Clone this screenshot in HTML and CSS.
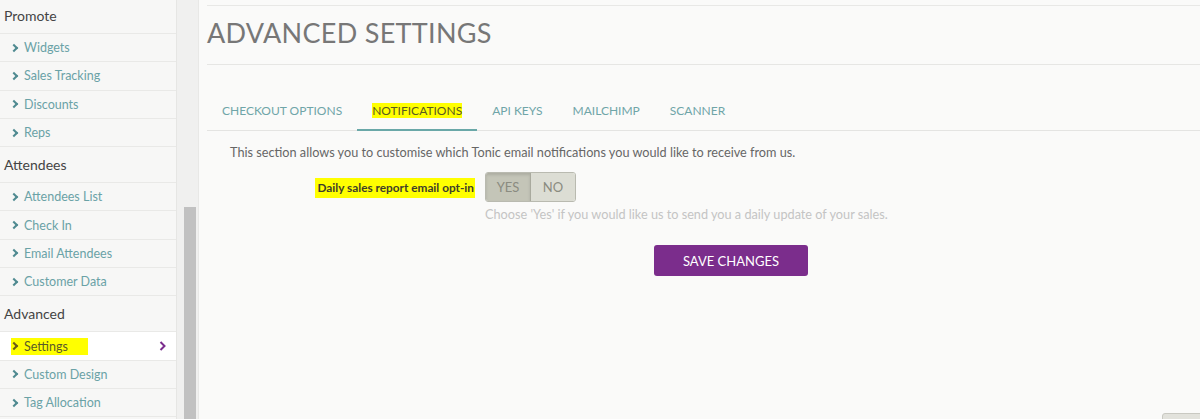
FILE: index.html
```html
<!DOCTYPE html>
<html lang="en">
<head>
    <meta charset="UTF-8">
    <meta name="viewport" content="width=device-width, initial-scale=1.0">
    <title>Advanced Settings</title>
    <link rel="stylesheet" href="styles.css">
</head>
<body>
    <div class="side">
        <ul class="menu">
            <li class="menu-head">Promote</li>
            <li class="menu-item"><span class="chev"></span>Widgets</li>
            <li class="menu-item"><span class="chev"></span>Sales Tracking</li>
            <li class="menu-item"><span class="chev"></span>Discounts</li>
            <li class="menu-item"><span class="chev"></span>Reps</li>
            <li class="menu-head">Attendees</li>
            <li class="menu-item"><span class="chev"></span>Attendees List</li>
            <li class="menu-item"><span class="chev"></span>Check In</li>
            <li class="menu-item"><span class="chev"></span>Email Attendees</li>
            <li class="menu-item"><span class="chev"></span>Customer Data</li>
            <li class="menu-head">Advanced</li>
            <li class="menu-item current">
                <span class="mark"><span class="chev"></span>Settings</span>
                <svg class="go" width="7" height="10" viewBox="0 0 7 10"><path d="M1.5 1 L5.5 5 L1.5 9" fill="none" stroke="#7b2d8e" stroke-width="2"/></svg>
            </li>
            <li class="menu-item"><span class="chev"></span>Custom Design</li>
            <li class="menu-item"><span class="chev"></span>Tag Allocation</li>
        </ul>
    </div>
    <div class="scroll"><div class="thumb"></div></div>

    <div class="main">
        <div class="page-head">
            <h1>ADVANCED SETTINGS</h1>
        </div>

        <ul class="tabs">
            <li>CHECKOUT OPTIONS</li>
            <li class="active"><span class="mark">NOTIFICATIONS</span></li>
            <li>API KEYS</li>
            <li>MAILCHIMP</li>
            <li>SCANNER</li>
        </ul>

        <div class="panel">
            <p class="intro">This section allows you to customise which Tonic email notifications you would like to receive from us.</p>

            <div class="field">
                <label class="field-label"><span class="mark">Daily sales report email opt-in</span></label>
                <div class="field-ctrl">
                    <div class="toggle">
                        <span class="on">YES</span>
                        <span>NO</span>
                    </div>
                    <p class="help">Choose 'Yes' if you would like us to send you a daily update of your sales.</p>
                </div>
            </div>

            <div class="actions">
                <button class="btn-save">SAVE CHANGES</button>
            </div>
        </div>

        <div class="corner-btn"></div>
    </div>
</body>
</html>
```

FILE: styles.css
```css
body {
    margin: 0;
    height: 419px;
    overflow: hidden;
    display: flex;
    font-family: Lato, "Open Sans", sans-serif;
    background: #fafaf9;
}

/* sidebar */
.side {
    width: 176px;
    flex: none;
    background: #f7f7f6;
    border-right: 1px solid #e6e6e4;
}
.menu {
    list-style: none;
    margin: -2px 0 0;
    padding: 0;
}
.menu li {
    box-sizing: border-box;
    border-bottom: 1px solid #e9e9e7;
    display: flex;
    align-items: center;
}
.menu-head {
    height: 36px;
    padding-left: 4px;
    font-size: 14px;
    color: #444;
}
.menu-item {
    height: 28.3px;
    padding-left: 12px;
    font-size: 12.5px;
    color: #6aa2a6;
}
.chev {
    width: 4px;
    height: 4px;
    border-top: 2px solid #4f8a90;
    border-right: 2px solid #4f8a90;
    transform: rotate(45deg);
    margin-right: 7px;
    margin-left: -1px;
}
.menu-item.current {
    background: #fff;
    color: #5a5a2a;
    justify-content: space-between;
    padding-right: 10px;
}
.menu-item.current .mark {
    display: flex;
    align-items: center;
    background: #ffff00;
    margin-left: -1px;
    padding: 1px 20px 1px 1px;
}
.menu-item.current .chev {
    border-color: #6b5b1a;
}

.scroll {
    width: 21px;
    flex: none;
    background: #f0f0ef;
    padding-top: 207px;
    box-sizing: border-box;
}
.thumb {
    width: 12px;
    height: 212px;
    margin-left: 7px;
    background: #c1c1c1;
}

/* main */
.main {
    flex: 1;
    position: relative;
    border-left: 1px solid #e8e8e6;
    padding-left: 8px;
}
.page-head {
    margin-top: 5px;
    border-top: 1px solid #e8e8e6;
    border-bottom: 1px solid #e6e6e4;
    padding: 11px 0 15px;
}
.page-head h1 {
    margin: 0;
    font-size: 27px;
    line-height: 32px;
    font-weight: 400;
    letter-spacing: 0.3px;
    color: #777;
}

.tabs {
    list-style: none;
    margin: 38px 0 0;
    padding: 0;
    display: flex;
    border-bottom: 1px solid #e4e4e2;
}
.tabs li {
    padding: 0 15px 10px;
    margin-bottom: -1px;
    border-bottom: 2px solid transparent;
    font-size: 12px;
    line-height: 16px;
    color: #6fa5a8;
}
.tabs li.active {
    border-bottom-color: #6aa8a8;
    color: #5a5a20;
}
.mark {
    background: #ffff00;
}

.panel {
    padding-left: 23px;
}
.intro {
    margin: 12px 0 0;
    font-size: 12.7px;
    line-height: 18px;
    color: #666;
}
.field {
    display: grid;
    grid-template-columns: 245px auto;
    column-gap: 10px;
    margin-top: 11px;
}
.field-label {
    text-align: right;
    font-size: 11.8px;
    font-weight: 700;
    color: #3d3d2a;
    padding-top: 8px;
}
.field-label .mark {
    padding: 2px 1px 3px 3px;
}
.toggle {
    display: inline-flex;
    border: 1px solid #b9bab0;
    border-radius: 3px;
    overflow: hidden;
}
.toggle span {
    width: 44px;
    height: 28px;
    line-height: 28px;
    text-align: center;
    font-size: 13px;
    color: #8a8b80;
    background: #dcddd4;
}
.toggle .on {
    background: #c4c5b8;
    border-right: 1px solid #a9aa9e;
    box-shadow: inset 0 2px 3px rgba(0, 0, 0, 0.12);
}
.help {
    margin: 4px 0 0;
    font-size: 12.7px;
    line-height: 16px;
    color: #c4c4c4;
}

.actions {
    margin-top: 23px;
    padding-left: 424px;
}
.btn-save {
    width: 154px;
    height: 31px;
    border: 0;
    border-radius: 3px;
    background: #7b2d8c;
    color: #fff;
    font-family: Lato, "Open Sans", sans-serif;
    font-size: 13px;
    cursor: pointer;
}

.corner-btn {
    position: absolute;
    left: 963px;
    top: 413px;
    width: 60px;
    height: 20px;
    background: #e2e2dc;
    border: 1px solid #c9c9c2;
    border-radius: 3px;
}
```
